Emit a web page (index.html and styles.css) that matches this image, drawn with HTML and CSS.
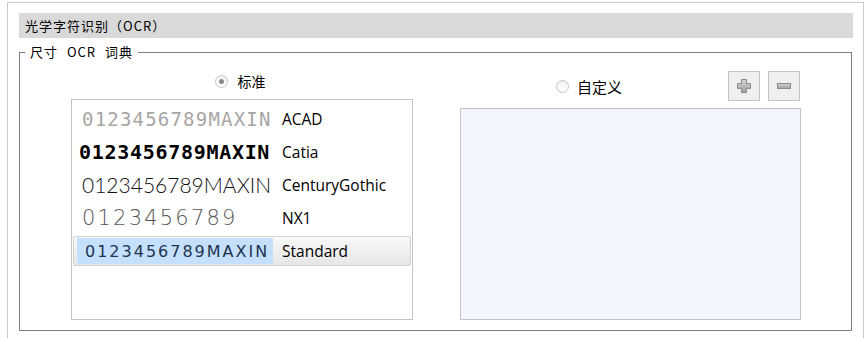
FILE: index.html
```html
<!DOCTYPE html>
<html lang="zh-CN">
<head>
  <meta charset="UTF-8">
  <title>光学字符识别 (OCR)</title>
  <link rel="stylesheet" href="styles.css">
</head>
<body>
  <div class="panel">
    <div class="panel-title">光学字符识别（OCR）</div>

    <fieldset class="group">
      <legend>尺寸 OCR 词典</legend>
      <div class="columns">

        <div class="col">
          <div class="col-head center">
            <label class="radio checked"><span class="dot"></span>标准</label>
          </div>
          <div class="font-list">
            <div class="row">
              <span class="sample f-acad">0123456789MAXIN</span>
              <span class="name">ACAD</span>
            </div>
            <div class="row">
              <span class="sample f-catia">0123456789MAXIN</span>
              <span class="name">Catia</span>
            </div>
            <div class="row">
              <span class="sample f-century">0123456789MAXIN</span>
              <span class="name">CenturyGothic</span>
            </div>
            <div class="row">
              <span class="sample f-nx">0123456789</span>
              <span class="name">NX1</span>
            </div>
            <div class="row selected">
              <span class="sample f-standard">0123456789MAXIN</span>
              <span class="name">Standard</span>
            </div>
          </div>
        </div>

        <div class="col">
          <div class="col-head">
            <label class="radio custom"><span class="dot"></span>自定义</label>
            <div class="tools">
              <button class="tool" title="添加">
                <svg width="16" height="16" viewBox="0 0 16 16">
                  <defs>
                    <linearGradient id="g1" x1="0" y1="0" x2="0" y2="1">
                      <stop offset="0" stop-color="#d6d6d6"/>
                      <stop offset="1" stop-color="#9c9c9c"/>
                    </linearGradient>
                  </defs>
                  <path d="M5.5 1.5h5v4h4v5h-4v4h-5v-4h-4v-5h4z" fill="url(#g1)" stroke="#8c8c8c"/>
                </svg>
              </button>
              <button class="tool" title="删除">
                <svg width="16" height="16" viewBox="0 0 16 16">
                  <defs>
                    <linearGradient id="g2" x1="0" y1="0" x2="0" y2="1">
                      <stop offset="0" stop-color="#d6d6d6"/>
                      <stop offset="1" stop-color="#a0a0a0"/>
                    </linearGradient>
                  </defs>
                  <rect x="1.5" y="5.5" width="13" height="5" fill="url(#g2)" stroke="#8c8c8c"/>
                </svg>
              </button>
            </div>
          </div>
          <div class="custom-box"></div>
        </div>

      </div>
    </fieldset>
  </div>
</body>
</html>
```

FILE: styles.css
```css
html, body {
  height: 100%;
}

body {
  margin: 0;
  overflow: hidden;
  background: #ffffff;
  color: #000000;
  font-family: "Noto Sans CJK SC", "Noto Sans", sans-serif;
  font-size: 13px;
}

.panel {
  margin: 2px 0 0 7px;
  width: 857px;
  height: 360px;
  padding: 10px 10px 0 11px;
  border: 1px solid #c9c9c9;
  box-sizing: border-box;
}

.panel-title {
  height: 25px;
  line-height: 25px;
  padding-left: 6px;
  background: #d9d9d9;
  font-size: 13px;
  letter-spacing: 1px;
  margin-bottom: 6px;
}

.group {
  margin: 0;
  padding: 0;
  min-width: 0;
  width: 833px;
  box-sizing: border-box;
  border: 1px solid #7f7f7f;
}

.group legend {
  margin-left: 5px;
  padding: 0 5px;
  line-height: 16px;
  font-size: 13px;
  letter-spacing: 1px;
  word-spacing: 5px;
}

.columns {
  display: grid;
  grid-template-columns: 342px 341px;
  column-gap: 47px;
  align-items: end;
  padding: 11px 50px 10px 51px;
}

.col {
  display: flex;
  flex-direction: column;
}

.col-head {
  display: flex;
  align-items: center;
}

.col-head.center {
  justify-content: center;
  height: 20px;
  margin-bottom: 8px;
  padding-right: 4px;
}

.col-head:not(.center) {
  height: 30px;
  margin-bottom: 7px;
}

.radio {
  display: flex;
  align-items: center;
  font-size: 14px;
  color: #000;
}

.radio .dot {
  width: 11px;
  height: 11px;
  margin-right: 10px;
  border: 1px solid #c6c6c6;
  border-radius: 50%;
  background: linear-gradient(#f2f2f2, #ffffff);
  position: relative;
}

.radio.checked .dot::after {
  content: "";
  position: absolute;
  left: 3px;
  top: 3px;
  width: 5px;
  height: 5px;
  border-radius: 50%;
  background: #8a8a8a;
}

.radio.custom {
  margin-left: 96px;
  font-size: 15px;
}

.radio.custom .dot {
  margin-right: 8px;
}

.tools {
  margin-left: auto;
  margin-right: 1px;
  display: flex;
  gap: 8px;
}

.tool {
  width: 32px;
  height: 30px;
  padding: 0;
  border: 1px solid #c4c4c4;
  background: #efefef;
  display: flex;
  align-items: center;
  justify-content: center;
}

.font-list {
  height: 221px;
  box-sizing: border-box;
  border: 1px solid #c4c4c4;
  padding-top: 2px;
  background: #fff;
}

.row {
  height: 33px;
  display: flex;
  align-items: center;
  margin: 0 1px;
  box-sizing: border-box;
}

.row.selected {
  height: 30px;
  margin-top: 2px;
  padding: 1px 3px;
  border: 1px solid #d2d2d2;
  border-radius: 2px;
  background: linear-gradient(#f9f9f9, #e6e6e6);
  align-items: stretch;
}

.sample {
  width: 200px;
  padding-left: 9px;
  box-sizing: border-box;
  white-space: nowrap;
  overflow: hidden;
}

.selected .sample {
  width: 196px;
  padding-left: 8px;
  display: flex;
  align-items: center;
  background: #c4e0fd;
}

.name {
  padding-left: 9px;
  font-family: "Open Sans", "Noto Sans", sans-serif;
  font-size: 15.5px;
  color: #000;
}

.selected .name {
  display: flex;
  align-items: center;
}

.f-acad {
  font-family: "DejaVu Sans Mono", monospace;
  font-size: 19px;
  color: #a6a6a6;
  letter-spacing: 1.2px;
  font-weight: 200;
}

.f-catia {
  font-family: "DejaVu Sans Mono", monospace;
  font-weight: bold;
  font-size: 20px;
  letter-spacing: 0.7px;
  color: #000;
  padding-left: 6px;
}

.f-century {
  font-family: Lato, sans-serif;
  font-size: 21px;
  font-weight: 300;
  color: #111;
}

.f-nx {
  font-family: "DejaVu Sans", sans-serif;
  font-size: 21px;
  letter-spacing: 2.2px;
  color: #555;
  font-weight: 200;
}

.f-standard {
  font-family: "DejaVu Sans", sans-serif;
  font-size: 16px;
  letter-spacing: 2px;
  color: #1f3350;
}

.custom-box {
  height: 212px;
  box-sizing: border-box;
  border: 1px solid #c4c4c4;
  background: #f1f6fe;
}
```
